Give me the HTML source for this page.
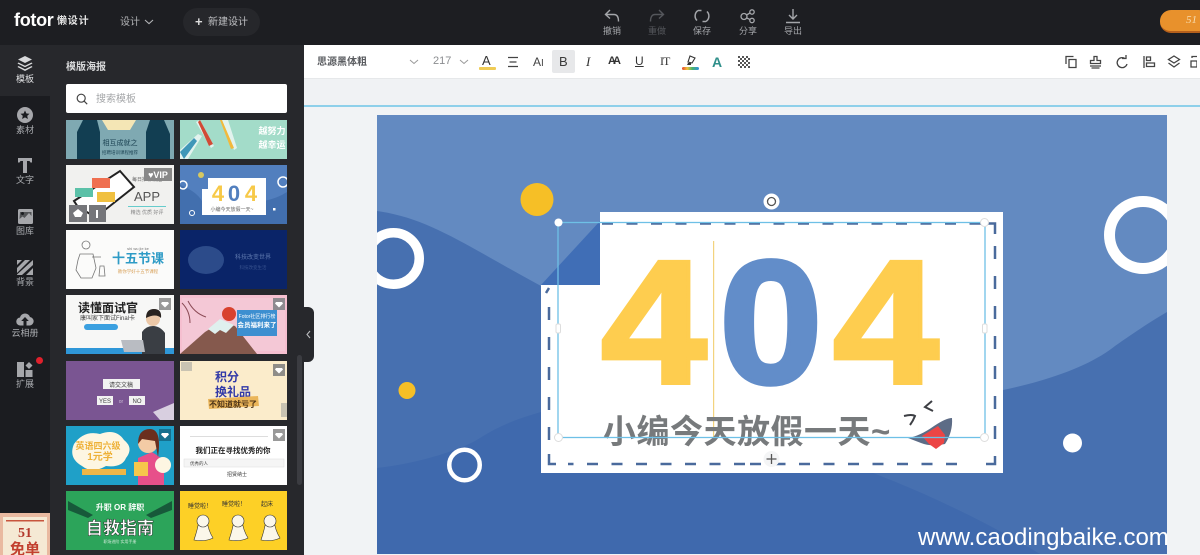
<!DOCTYPE html>
<html lang="zh"><head><meta charset="utf-8"><title>Fotor 懒设计</title>
<style>
*{box-sizing:border-box}
html,body{margin:0;padding:0}
body{width:1200px;height:555px;overflow:hidden;position:relative;background:#f0f2f4;font-family:"Liberation Sans","Noto Sans CJK SC",sans-serif}
.a{position:absolute}
.t{position:absolute;white-space:nowrap;line-height:1}
#top{left:0;top:0;width:1200px;height:45px;background:#1d1e22}
#side{left:0;top:45px;width:50px;height:510px;background:#1b1c20}
#sel{left:0;top:45px;width:50px;height:51px;background:#27282c}
#panel{left:50px;top:45px;width:254px;height:510px;background:#27282c}
.nav{position:absolute;left:0;width:50px;text-align:center;font-size:9px;line-height:11px;color:#a9abaf}
.nav svg{display:block;margin:0 auto 2px}
.th{position:absolute;overflow:hidden;width:108px}
.c1{left:66px}.c2{left:180px;width:107px}
.tool{position:absolute;top:8px;width:40px;text-align:center;font-size:9px;line-height:10px;color:#a4a6aa}
.tool svg{display:block;margin:0 auto 2px}
#bar{left:304px;top:45px;width:896px;height:34px;background:#fff;border-bottom:1px solid #e6e8ea}
svg text{font-family:"Liberation Sans","Noto Sans CJK SC",sans-serif}
</style></head><body>
<div class="a" id="top"></div>
<div class="a" id="panel"></div>
<div class="a" id="side"></div>
<div class="a" id="sel"></div>

<div class="t" style="left:14px;top:11px;font-size:18px;font-weight:bold;color:#fff;letter-spacing:-.3px">fotor</div>
<div class="t" style="left:57px;top:17px;font-size:10px;font-weight:bold;color:#e4e4e4;letter-spacing:.8px">懒设计</div>
<div class="t" style="left:120px;top:18px;font-size:10px;color:#b3b4b7">设计</div>
<svg class="a" style="left:144px;top:19px" width="10" height="6"><path d="M1 1l4 3.600L9 1" fill="none" stroke="#b3b4b7" stroke-width="1.100"/></svg>
<div class="a" style="left:183px;top:8px;width:77px;height:28px;border-radius:14px;background:#26272b"></div>
<div class="t" style="left:195px;top:15px;font-size:13px;font-weight:bold;color:#dcdcdc">+</div>
<div class="t" style="left:208px;top:18px;font-size:10px;color:#c0c1c4">新建设计</div>

<div class="tool" style="left:592px"><svg width="18" height="16" fill="none" stroke="#a4a6aa" stroke-width="1.400"><path d="M7 2L2.500 6.500 7 10.500M3 6.500h8c3 0 4.500 2.500 4.500 7"/></svg>撤销</div>
<div class="tool" style="left:637px;color:#55575c"><svg width="18" height="16" fill="none" stroke="#55575c" stroke-width="1.400"><path d="M11 2l4.500 4.500L11 10.500M15 6.500H7c-3 0-4.500 2.500-4.500 7"/></svg>重做</div>
<div class="tool" style="left:682px"><svg width="18" height="16" fill="none" stroke="#a4a6aa" stroke-width="1.500"><path d="M5 2.500a6.500 6.500 0 0 0-1 10M13 13.500a6.500 6.500 0 0 0 1-10M5 2.500h3.500M13 13.500H9.500"/></svg>保存</div>
<div class="tool" style="left:728px"><svg width="18" height="16" fill="none" stroke="#a4a6aa" stroke-width="1.300"><circle cx="5" cy="8.500" r="3"/><circle cx="13" cy="4" r="2.200"/><circle cx="13" cy="12.500" r="2.200"/><path d="M7.500 7l3.500-2M7.800 10l3.200 1.500"/></svg>分享</div>
<div class="tool" style="left:773px"><svg width="18" height="16" fill="none" stroke="#a4a6aa" stroke-width="1.400"><path d="M9 1v9.500M5 7l4 4 4-4M2 14.500h14"/></svg>导出</div>

<div class="a" style="left:1160px;top:10px;width:50px;height:23px;border-radius:11px;background:#e8912c;border-bottom:2px solid #b5601c"></div>
<div class="t" style="left:1186px;top:15px;font-size:11px;font-style:italic;color:#f7dcae;font-family:'Liberation Serif',serif">51</div>

<div class="nav" style="top:56px;color:#e0e1e3"><svg width="16" height="15" fill="#d8d9db" style="margin-bottom:3px"><path d="M8 0l7 3.500-7 3.500-7-3.500zM1.500 6.500L8 9.800l6.500-3.300 1 1L8 11.300.5 7.500zM1.500 10L8 13.300 14.500 10l1 1L8 15 .5 11z"/></svg>模板</div>
<div class="nav" style="top:107px"><svg width="16" height="16"><circle cx="8" cy="8" r="8" fill="#a6a7ab"/><path d="M8 3.500l1.400 3 3.100.3-2.300 2.100.7 3.100L8 10.400 5.100 12l.7-3.100L3.500 6.800l3.100-.3z" fill="#1b1c20"/></svg>素材</div>
<div class="nav" style="top:158px"><svg width="16" height="15" fill="#a6a7ab"><path d="M1 0h14v4.500h-1.500L12.500 3H10v12H6V3H3.500l-1 1.500H1z"/></svg>文字</div>
<div class="nav" style="top:209px"><svg width="15" height="15"><rect width="15" height="15" rx="1.500" fill="#a6a7ab"/><circle cx="4.500" cy="4.500" r="1.500" fill="#1b1c20"/><path d="M1.500 10l3-2.500 2 1.500L11 4l2.500 3V3H2z" fill="#1b1c20" opacity=".6"/></svg>图库</div>
<div class="nav" style="top:260px"><svg width="16" height="15" fill="#a6a7ab"><path d="M0 0h5L0 5zM8 0h5L0 13V8zM16 0v5L5 15H0v-.500zM16 8v7h-7z"/></svg>背景</div>
<div class="nav" style="top:312px"><svg width="18" height="14" fill="#a6a7ab"><path d="M4.500 13.500a4 4 0 0 1-.500-8A5.200 5.200 0 0 1 14 5a4.300 4.300 0 0 1 0 8.500h-3.500V9h2.300L9 5 5.200 9h2.300v4.500z"/></svg>云相册</div>
<div class="nav" style="top:362px"><svg width="16" height="15" fill="#a6a7ab"><rect width="7" height="15"/><rect x="8.500" y="8" width="7" height="7"/><path d="M12 0l3.500 3.500L12 7 8.500 3.500z"/></svg>扩展</div>
<div class="a" style="left:36px;top:357px;width:7px;height:7px;border-radius:50%;background:#e0202c"></div>

<svg class="a" style="left:0;top:513px" width="50" height="42"><rect width="50" height="42" fill="#e9b9a0"/><rect x="3" y="4" width="44" height="40" fill="#f5e9d4"/><rect x="6" y="7" width="38" height="1.500" fill="#c8553d"/><text x="25" y="24" font-size="14" font-weight="bold" text-anchor="middle" fill="#b3392c" style="font-family:'Liberation Serif',serif">51</text><text x="25" y="41" font-size="15" font-weight="bold" text-anchor="middle" fill="#c2402f">免单</text></svg>

<div class="t" style="left:66px;top:63px;font-size:10px;font-weight:bold;color:#d8d9da">模版海报</div>
<div class="a" style="left:66px;top:84px;width:221px;height:29px;background:#fff;border-radius:2px"></div>
<svg class="a" style="left:76px;top:93px" width="12" height="12" fill="none" stroke="#444" stroke-width="1.200"><circle cx="5.200" cy="5.200" r="4"/><path d="M8.200 8.200l3 3"/></svg>
<div class="t" style="left:96px;top:95px;font-size:10px;color:#a4a6a8">搜索模板</div>

<!-- Template thumbnails -->
<svg class="th c1" style="top:120px;height:39px" viewBox="0 0 108 39"><rect width="108" height="39" fill="#7fa9b2"/><path d="M11 39V12l6-12h14l3 12v27zM80 39V12l4-12h14l6 14v25z" fill="#123e52"/><path d="M36 0h34L64 10H42z" fill="#f4e6b5"/><text x="54" y="25" font-size="7" text-anchor="middle" fill="#1d4454">相互成就之</text><text x="54" y="34" font-size="4.500" text-anchor="middle" fill="#1d4454">招聘培训课程推荐</text></svg>
<svg class="th c2" style="top:120px;height:39px" viewBox="0 0 107 39"><rect width="107" height="39" fill="#a3dcc9"/><path d="M0 30L18 14l4 2L8 39H0zM20 0l14 26-3 2L16 2zM42 0l12 30 3-2L48 0z" fill="#e2f3ee"/><path d="M20 0l13 24-4 2L18 2z" fill="#d14a36"/><path d="M42 0l12 28-3 1L40 0z" fill="#f2b93c"/><path d="M0 32l14-14 3 3L4 39z" fill="#3f97b8"/><text x="92" y="14" font-size="9" font-weight="bold" text-anchor="middle" fill="#fff">越努力</text><text x="92" y="28" font-size="9" font-weight="bold" text-anchor="middle" fill="#fff">越幸运</text></svg>

<svg class="th c1" style="top:165px;height:59px" viewBox="0 0 108 59"><rect width="108" height="59" fill="#f1f1ef"/><path d="M8 36l46-30 14 16-38 30-4-2-14-8z" fill="#fff" stroke="#222" stroke-width="2"/><rect x="26" y="13" width="18" height="10" fill="#ef6f50"/><rect x="9" y="23" width="18" height="9" fill="#5bc1a8"/><rect x="31" y="27" width="18" height="10" fill="#f0c040"/><text x="81" y="36" font-size="13" fill="#555" text-anchor="middle">APP</text><rect x="62" y="41" width="38" height="1" fill="#6cc"/><text x="81" y="49" font-size="5" text-anchor="middle" fill="#888">精选 优质 好评</text><text x="81" y="16" font-size="5" text-anchor="middle" fill="#666">每日推荐精选</text><rect x="78" y="3" width="28" height="13" fill="#888"/><text x="92" y="13" font-size="9" font-weight="bold" fill="#fff" text-anchor="middle">♥VIP</text><rect x="3" y="40" width="18" height="17" fill="#75767a"/><rect x="23" y="40" width="17" height="17" fill="#75767a"/><path d="M12 44l5 4-2 4H9l-2-4z" fill="#fff"/><rect x="30" y="45" width="2" height="8" fill="#fff"/></svg>
<svg class="th c2" style="top:165px;height:59px" viewBox="0 0 107 59"><rect width="107" height="59" fill="#527fbe"/><path d="M0 20q16 6 22 16h62q14-3 23-9v32H0z" fill="#426fae"/><path d="M28 13h58v37H22V24h6z" fill="#fff"/><text x="38" y="36" font-size="22" font-weight="bold" fill="#f7c948" text-anchor="middle">4</text><text x="54" y="36" font-size="22" font-weight="bold" fill="#527fbe" text-anchor="middle">0</text><text x="71" y="36" font-size="22" font-weight="bold" fill="#f7c948" text-anchor="middle">4</text><text x="52" y="46" font-size="5" text-anchor="middle" fill="#666">小编今天放假一天~</text><circle cx="21" cy="10" r="3" fill="#d7c860"/><circle cx="3" cy="20" r="4" fill="none" stroke="#fff" stroke-width="1.500"/><circle cx="103" cy="17" r="5" fill="none" stroke="#fff" stroke-width="1.500"/><circle cx="12" cy="48" r="2.500" fill="none" stroke="#fff"/><rect x="93" y="43" width="2.500" height="2.500" fill="#fff"/></svg>

<svg class="th c1" style="top:230px;height:59px" viewBox="0 0 108 59"><rect width="108" height="59" fill="#fbfbfa"/><g fill="none" stroke="#777" stroke-width=".8"><circle cx="20" cy="15" r="4"/><path d="M14 24h13l3 14-4 10H15l-5-8 2-10zM26 27h9M34 36h4l1 10h-6z"/></g><text x="72" y="33" font-size="13" font-weight="bold" fill="#2e9bc6" text-anchor="middle">十五节课</text><text x="72" y="43" font-size="4.500" fill="#d8a15a" text-anchor="middle">教你学好十五节课程</text><text x="72" y="20" font-size="4" fill="#777" text-anchor="middle">shi wu jie ke</text></svg>
<svg class="th c2" style="top:230px;height:59px" viewBox="0 0 107 59"><rect width="107" height="59" fill="#0a2468"/><ellipse cx="26" cy="30" rx="18" ry="14" fill="#2c4b8a"/><text x="73" y="29" font-size="6" fill="#5d77ad" text-anchor="middle">科技改变世界</text><text x="73" y="39" font-size="4.500" fill="#38528e" text-anchor="middle">科技改变生活</text></svg>

<svg class="th c1" style="top:295px;height:59px" viewBox="0 0 108 59"><rect width="108" height="59" fill="#f7f7f6"/><path d="M0 53h108v6H0z" fill="#2f97d8"/><text x="12" y="17" font-size="12" font-weight="bold" fill="#222">读懂面试官</text><text x="14" y="25" font-size="6" fill="#444">康叫家下面试Final卡</text><rect x="18" y="29" width="34" height="6" rx="3" fill="#3ba0e0"/><path d="M76 59V37q4-6 11-6t12 7v21z" fill="#3a3e44"/><circle cx="87" cy="24" r="7" fill="#ecc8a8"/><path d="M80 23q0-9 8-9t7 9q-5-5-15 0z" fill="#2a2320"/><path d="M55 45h22l2 12H58z" fill="#b9bcc2"/><rect x="93" y="3" width="12" height="12" fill="#999"/><path d="M96 7h6l1 1.500-4 4-4-4z" fill="#fff"/></svg>
<svg class="th c2" style="top:295px;height:59px" viewBox="0 0 107 59"><rect width="107" height="59" fill="#f5bfd0"/><rect x="2" y="3" width="103" height="53" fill="#f4c8d6"/><path d="M0 59l25-22 16-10 14 4 22 28z" fill="#85594d"/><path d="M28 34l12-10 14 6-8 8-6-3-5 4z" fill="#dff0ee"/><circle cx="49" cy="19" r="7" fill="#d8412e"/><rect x="57" y="15" width="40" height="26" fill="#3d8fd0"/><text x="77" y="23" font-size="5" fill="#fff" text-anchor="middle">Fotor社区排行榜</text><text x="77" y="32" font-size="6.500" font-weight="bold" fill="#fff" text-anchor="middle">会员福利来了</text><rect x="93" y="3" width="12" height="12" fill="#8e8a90"/><path d="M96 7h6l1 1.500-4 4-4-4z" fill="#fff"/><path d="M2 8q8 8 8 20M8 6q6 12 18 16" stroke="#8b4a55" fill="none"/></svg>

<svg class="th c1" style="top:361px;height:59px" viewBox="0 0 108 59"><rect width="108" height="59" fill="#7a5592"/><path d="M108 42v17H94l-7-8z" fill="#d8cfe0"/><rect x="37" y="18" width="37" height="10" fill="#f2f2f2"/><text x="55" y="26" font-size="6" fill="#444" text-anchor="middle">请交文稿</text><rect x="31" y="35" width="16" height="9" fill="#f2f2f2"/><text x="39" y="42" font-size="6" fill="#444" text-anchor="middle">YES</text><rect x="63" y="35" width="16" height="9" fill="#f2f2f2"/><text x="71" y="42" font-size="6" fill="#444" text-anchor="middle">NO</text><text x="55" y="42" font-size="5" fill="#c9b9d4" text-anchor="middle">or</text></svg>
<svg class="th c2" style="top:361px;height:59px" viewBox="0 0 107 59"><rect width="107" height="59" fill="#fbeccb"/><text x="47" y="20" font-size="12" font-weight="bold" fill="#3139a8" text-anchor="middle">积分</text><text x="53" y="35" font-size="12" font-weight="bold" fill="#3139a8" text-anchor="middle">换礼品</text><path d="M28 38l50-3 1 10-50 3z" fill="#eab55a"/><text x="53" y="46" font-size="8" font-weight="bold" fill="#4d3417" text-anchor="middle">不知道就亏了</text><rect x="93" y="3" width="12" height="12" fill="#8f8d88"/><path d="M96 7h6l1 1.500-4 4-4-4z" fill="#fff"/><rect x="1" y="1" width="11" height="9" fill="#c9c3b2"/><rect x="101" y="42" width="6" height="14" fill="#c9c3b2"/></svg>

<svg class="th c1" style="top:426px;height:59px" viewBox="0 0 108 59"><rect width="108" height="59" fill="#1fa0c8"/><path d="M8 18q10-14 26-10 16-6 24 6 10 8 2 18-4 10-20 8-14 8-24 0-14-8-8-22z" fill="#fdf6e2"/><text x="32" y="23" font-size="9" font-weight="bold" fill="#eeb138" text-anchor="middle">英语四六级</text><text x="34" y="34" font-size="10" font-weight="bold" fill="#eeb138" text-anchor="middle">1元学</text><path d="M16 43h44v6H16z" fill="#edb646"/><path d="M72 59V32l14-6 12 8v25z" fill="#e7508a"/><circle cx="82" cy="17" r="10" fill="#f3cba5"/><path d="M72 18q0-15 12-15t8 28l-3-16-13-2z" fill="#6b2f1e"/><path d="M68 36h14v14H68z" fill="#f6c74b"/><circle cx="97" cy="39" r="8" fill="#fdf6e2"/><rect x="93" y="3" width="12" height="12" fill="#16708e"/><path d="M96 7h6l1 1.500-4 4-4-4z" fill="#fff"/></svg>
<svg class="th c2" style="top:426px;height:59px" viewBox="0 0 107 59"><rect width="107" height="59" fill="#fff"/><rect x="10" y="10" width="78" height="1" fill="#ddd"/><text x="53" y="27" font-size="7.500" font-weight="bold" fill="#222" text-anchor="middle">我们正在寻找优秀的你</text><rect x="4" y="33" width="100" height="8" fill="#f5f5f5" stroke="#ddd" stroke-width=".5"/><text x="10" y="39" font-size="4.500" fill="#444">优秀的人</text><text x="57" y="50" font-size="5" fill="#333" text-anchor="middle">招贤纳士</text><rect x="93" y="3" width="12" height="12" fill="#999"/><path d="M96 7h6l1 1.500-4 4-4-4z" fill="#fff"/></svg>

<svg class="th c1" style="top:491px;height:59px" viewBox="0 0 108 59"><rect width="108" height="59" fill="#2ca45a"/><path d="M2 10l25 14-5 3-20-8zM106 10L80 24l5 3 21-8z" fill="#17593a"/><text x="54" y="19" font-size="8" font-weight="bold" fill="#fff" text-anchor="middle">升职 OR 辞职</text><text x="54" y="43" font-size="17" font-weight="bold" fill="#fff" text-anchor="middle" stroke="#111" stroke-width=".4">自救指南</text><text x="54" y="52" font-size="4" fill="#cfe9d8" text-anchor="middle">职场进阶 实用手册</text></svg>
<svg class="th c2" style="top:491px;height:59px" viewBox="0 0 107 59"><rect width="107" height="59" fill="#fdd026"/><text x="20" y="17" font-size="6" fill="#333" text-anchor="middle">睡觉啦！</text><text x="54" y="15" font-size="6" fill="#333" text-anchor="middle">睡觉啦！</text><text x="87" y="15" font-size="6" fill="#333" text-anchor="middle">起床</text><g fill="#fbf7ea" stroke="#333" stroke-width=".6"><path d="M14 49q4-12 5-20h8q1 10 6 18-8 4-19 2z"/><path d="M49 49q4-12 5-20h8q1 10 6 18-8 4-19 2z"/><path d="M81 49q4-12 5-20h8q1 10 6 18-8 4-19 2z"/></g><g fill="#fbf7ea" stroke="#333" stroke-width=".6"><circle cx="23" cy="30" r="6"/><circle cx="58" cy="30" r="6"/><circle cx="90" cy="30" r="6"/></g></svg>

<div class="a" style="left:297px;top:355px;width:5px;height:130px;border-radius:3px;background:#3b3c41"></div>

<div class="a" style="left:304px;top:80px;width:896px;height:25px;background:#f0f2f4"></div>
<div class="a" style="left:304px;top:105px;width:896px;height:2px;background:#8ed0ea"></div>
<div class="a" style="left:304px;top:107px;width:896px;height:448px;background:#f1f3f5"></div>

<div class="a" id="bar">
  <div class="t" style="left:13px;top:13px;font-size:10px;font-weight:bold;color:#5a5c60">思源黑体粗</div>
  <svg class="a" style="left:105px;top:14px" width="10" height="6"><path d="M1 1l4 3.500L9 1" fill="none" stroke="#999"/></svg>
  <div class="t" style="left:129px;top:11px;font-size:11px;color:#8b8d90">217</div>
  <svg class="a" style="left:155px;top:14px" width="10" height="6"><path d="M1 1l4 3.500L9 1" fill="none" stroke="#999"/></svg>
  <div class="t" style="left:178px;top:9px;font-size:13px;color:#333">A</div>
  <div class="a" style="left:175px;top:22px;width:17px;height:3px;background:#efcb55;border-radius:1px"></div>
  <svg class="a" style="left:203px;top:11px" width="12" height="12" stroke="#444" stroke-width="1.200"><path d="M1 1.500h10M2.500 6h7M1 10.500h10"/></svg>
  <div class="t" style="left:229px;top:11px;font-size:12px;color:#444">A<span style="font-size:10px">I</span></div>
  <div class="a" style="left:248px;top:5px;width:23px;height:23px;background:#e7e8ea;border-radius:2px"></div>
  <div class="t" style="left:255px;top:10px;font-size:13px;color:#3a3a3a">B</div>
  <div class="t" style="left:282px;top:10px;font-size:13px;font-style:italic;font-family:'Liberation Serif',serif;color:#333">I</div>
  <div class="t" style="left:304px;top:11px;font-size:11px;letter-spacing:-3px;color:#333;font-weight:bold">AA</div>
  <div class="t" style="left:331px;top:10px;font-size:12px;color:#333;text-decoration:underline">U</div>
  <div class="t" style="left:356px;top:10px;font-size:12px;color:#333;letter-spacing:-1px;font-family:'Liberation Serif',serif">IT</div>
  <svg class="a" style="left:378px;top:8px" width="18" height="18"><path d="M6 9l2-6 5 2-3 5z" fill="none" stroke="#333" stroke-width="1.100"/><path d="M6 10h3v2H5z" fill="#333"/><defs><linearGradient id="rb"><stop offset="0" stop-color="#e6432e"/><stop offset=".3" stop-color="#f2c23b"/><stop offset=".6" stop-color="#49b36a"/><stop offset="1" stop-color="#2d8fe0"/></linearGradient></defs><rect x="0" y="14" width="17" height="3" rx="1.500" fill="url(#rb)"/></svg>
  <div class="t" style="left:408px;top:10px;font-size:14px;font-weight:bold;color:#2f8f8a">A</div>
  <svg class="a" style="left:434px;top:11px" width="12" height="12" fill="#555"><path d="M0 0h2v2H0zM4 0h2v2H4zM8 0h2v2H8zM2 2h2v2H2zM6 2h2v2H6zM10 2h2v2h-2zM0 4h2v2H0zM4 4h2v2H4zM8 4h2v2H8zM2 6h2v2H2zM6 6h2v2H6zM10 6h2v2h-2zM0 8h2v2H0zM4 8h2v2H4zM8 8h2v2H8zM2 10h2v2H2zM6 10h2v2H6zM10 10h2v2h-2z"/></svg>
  <svg class="a" style="left:761px;top:10px" width="132" height="14" fill="none" stroke="#444" stroke-width="1.300"><path d="M1 9V1.500h7.500M4 4.500h7v8H4z"/><path d="M29 1.500h3v4h3.500v3h-10v-3H29zM25 11h11M26.500 13h8"/><path d="M60 3.500A5 5 0 1 0 62 9M57 3.500h4V0"/><path d="M79 1v12M81.500 2h4v3.500h-4zM81.500 8h8v3.500h-8z"/><path d="M109 1l5.500 3.500L109 8l-5.500-3.500zM103.500 8l5.500 4 5.500-4"/><path d="M127 3v-1.500h5M126 6h6v6h-6z"/></svg>
</div>

<!-- Poster canvas -->
<svg class="a" style="left:377px;top:115px" width="790" height="439" viewBox="377 115 790 439">
  <rect x="377" y="115" width="790" height="439" fill="#638ac1"/>
  <path d="M377 211C430 218 470 248 541 286L1003 390C1060 378 1095 362 1115 346C1135 332 1150 322 1167 312V554H377Z" fill="#4770b0"/>
  <path d="M377 468C430 462 470 445 480 438C500 425 520 418 541 412C700 400 900 470 1040 554H377Z" fill="#3f69ad"/>
  <circle cx="537" cy="199.500" r="16.500" fill="#f6bf26"/>
  <circle cx="393.500" cy="258.500" r="25.750" fill="none" stroke="#fff" stroke-width="9.500"/>
  <circle cx="407" cy="390.500" r="8.500" fill="#f6bf26"/>
  <circle cx="464.500" cy="465" r="15.250" fill="none" stroke="#fff" stroke-width="4.500"/>
  <circle cx="1143" cy="235" r="33.500" fill="none" stroke="#fff" stroke-width="11"/>
  <circle cx="1072.500" cy="443" r="9.500" fill="#fff"/>
  <path d="M600 212H1003V473H541V285H600Z" fill="#fff"/>
  <path d="M600 221V285H541Z" fill="#406eb6"/>
  <g stroke="#4a6a9c" stroke-width="2.500" fill="none">
    <path d="M602 223.500H992" stroke-dasharray="11 13.500"/>
    <path d="M980 223.500H995V234" />
    <path d="M995 246V452" stroke-dasharray="13 17"/>
    <path d="M995 456V464H986"/>
    <path d="M750 464H970" stroke-dasharray="11 13.500"/>
    <path d="M745 464H568" stroke-dasharray="11 13.500"/>
    <path d="M549 454V464H556"/>
    <path d="M549 307V442" stroke-dasharray="13 17"/>
    <path d="M549 288L546 293"/>
  </g>
  <g font-size="176" font-weight="bold" stroke-width="4">
    <text transform="translate(601 383) scale(1.080 1)" fill="#fecd4f" stroke="#fecd4f">4</text>
    <text transform="translate(719 383) scale(1.060 1)" fill="#628dc9" stroke="#628dc9">0</text>
    <text transform="translate(833 383) scale(1.080 1)" fill="#fecd4f" stroke="#fecd4f">4</text>
  </g>
  <rect x="713" y="241" width="1.200" height="200" fill="#f3d37e"/>
  <text x="603" y="443" font-size="33" font-weight="bold" fill="#777a7c" letter-spacing=".5">小编今天放假一天~</text>
  <path d="M904 416q8-2 11 0-2 5-5 9M932 401l-7 6 8 4" fill="none" stroke="#3d3f44" stroke-width="2"/>
  <path d="M908 438q12-2 26-12 12-8 18-8 1 14-7 26-14 3-24-1z" fill="#5d6c86"/>
  <path d="M922 436l16-10 7 9-1 8-8 6-7-5z" fill="#ec4545"/>
  <rect x="558" y="222.500" width="427" height="215" fill="none" stroke="#6ec0e6" stroke-width="1.300"/>
  <circle cx="558.500" cy="222.500" r="4" fill="#fff"/>
  <g fill="#fff" stroke="#ddd"><circle cx="984.500" cy="222.500" r="4"/><circle cx="558.500" cy="437.500" r="4"/><circle cx="984.500" cy="437.500" r="4"/><rect x="556" y="324" width="4.500" height="9" rx="1.500"/><rect x="982.500" y="324" width="4.500" height="9" rx="1.500"/></g>
  <circle cx="771.500" cy="201.500" r="8" fill="#fff"/>
  <circle cx="771.500" cy="201.500" r="4" fill="none" stroke="#555" stroke-width="1.300"/>
  <circle cx="771.500" cy="459" r="8" fill="#f4f5f6"/>
  <path d="M771.500 454v10M766.500 459h10" stroke="#555" stroke-width="1.300"/>
</svg>

<div class="a" style="left:304px;top:307px;width:10px;height:55px;background:#27282c;border-radius:0 6px 6px 0"></div>
<svg class="a" style="left:305px;top:330px" width="7" height="9"><path d="M5 1L2 4.500 5 8" fill="none" stroke="#b9babd" stroke-width="1.100"/></svg>

<div class="t" style="left:918px;top:526px;font-size:24px;color:#fff">www.caodingbaike.com</div>
</body></html>
